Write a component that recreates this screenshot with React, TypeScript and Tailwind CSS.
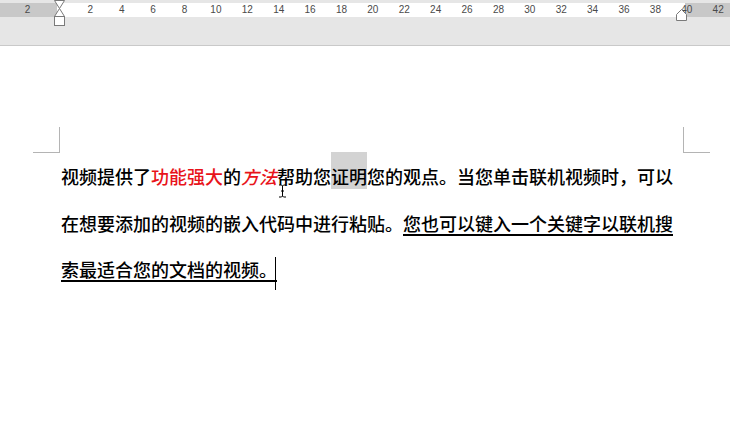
import React from "react";

const labels = ["2", "", "2", "4", "6", "8", "10", "12", "14", "16", "18", "20", "22", "24", "26", "28", "30", "32", "34", "36", "38", "40", "42"];

function Ruler() {
  return (
    <div className="relative h-[46px] bg-[#e6e6e6] border-b border-[#c9c9c9]">
      <div className="pt-[3px]">
        <div className="grid h-[14px]">
          <div className="col-start-1 row-start-1 flex">
            <div className="w-[57px] bg-[#c8c8c8]" />
            <div className="flex-1 bg-white" />
            <div className="w-[49px] bg-[#c8c8c8]" />
          </div>
          <div className="col-start-1 row-start-1 flex pl-[11.9px] items-center">
            {labels.map((l, i) => (
              <div key={i} className="w-[31.4px] shrink-0 text-center text-[10px] leading-none text-[#4a4a4a] font-['Liberation_Sans',sans-serif]">
                {l}
              </div>
            ))}
          </div>
        </div>
      </div>
      {/* left indent markers */}
      <svg className="absolute left-[53px] top-0" width="13" height="27" viewBox="0 0 13 27">
        <path d="M1.5 0.5 L11.5 0.5 L6.5 8.5 Z" fill="#fff" stroke="#7a7a7a" strokeWidth="1" />
        <path d="M6.5 8.5 L11.5 16.5 L1.5 16.5 Z" fill="#fff" stroke="#7a7a7a" strokeWidth="1" />
        <rect x="1.5" y="16.5" width="10" height="9" fill="#fff" stroke="#7a7a7a" strokeWidth="1" />
      </svg>
      {/* right indent marker */}
      <svg className="absolute left-[675px] top-[9px]" width="13" height="13" viewBox="0 0 13 13">
        <path d="M6.5 0.5 L11.5 5.5 L11.5 11.5 L1.5 11.5 L1.5 5.5 Z" fill="#fff" stroke="#7a7a7a" strokeWidth="1" />
      </svg>
    </div>
  );
}

export default function App() {
  return (
    <div className="relative w-[730px] h-[445px] overflow-hidden bg-white font-['Noto_Sans_CJK_SC',sans-serif]">
      <Ruler />
      <div className="pt-[81px] pl-[33px]">
        <div className="grid grid-cols-[27px_623px_27px] grid-rows-[26px_auto]">
          <div className="border-r border-b border-[#b4b4b4]" />
          <div />
          <div className="border-l border-b border-[#b4b4b4]" />
          <div />
          <div className="pl-[1px] text-[18px] leading-[46.5px] text-black font-medium whitespace-nowrap">
            视频提供了<span className="text-[#e8131a]">功能强大</span>的<span className="text-[#e8131a] italic">方法</span>帮助您<span className="bg-[#d3d3d3] pt-[11px]">证明</span>您的观点。当您单击联机视频时，可以
            <br />
            在想要添加的视频的嵌入代码中进行粘贴。<span className="underline decoration-[1.5px] underline-offset-[3px]">您也可以键入一个关键字以联机搜</span>
            <br />
            <span className="underline decoration-[1.5px] underline-offset-[3px]">索最适合您的文档的视频。</span>
            <span className="inline-block w-px h-[33px] bg-black align-[-13px] -ml-[2px]" />
          </div>
        </div>
      </div>
      {/* mouse I-beam pointer */}
      <svg className="absolute left-[278px] top-[184px]" width="9" height="14" viewBox="0 0 9 14">
        <path d="M1 1 H3.5 L4.5 2 L5.5 1 H8 M4.5 2 V12 M1 13 H3.5 L4.5 12 L5.5 13 H8 M3 7 H6" stroke="#000" strokeWidth="1" fill="none" />
      </svg>
    </div>
  );
}
